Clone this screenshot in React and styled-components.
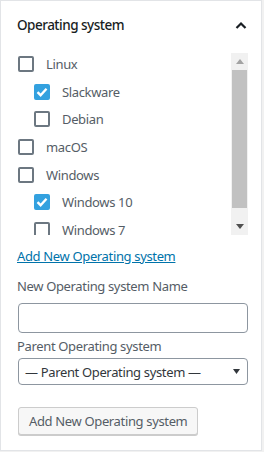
import React from "react";
import styled, { createGlobalStyle } from "styled-components";

const GlobalStyle = createGlobalStyle`
  html, body {
    margin: 0;
    padding: 0;
    background: #f1f1f1;
  }
  body {
    font-family: "Noto Sans", "Open Sans", sans-serif;
    font-size: 13px;
    letter-spacing: -0.35px;
    color: #555d66;
  }
`;

const Panel = styled.div`
  width: 260px;
  height: 449px;
  background: #fff;
  border: 1px solid #e2e4e7;
  box-sizing: content-box;
`;

const Header = styled.div`
  height: 48px;
  display: flex;
  align-items: center;
  justify-content: space-between;
  padding: 0 14px 0 16px;
  h2 {
    margin: 0;
    font-size: 13.5px;
    font-weight: 500;
    letter-spacing: -0.5px;
    color: #191e23;
  }
`;

const Body = styled.div`
  padding: 4px 13px 0 16px;
`;

const ScrollBox = styled.div`
  display: flex;
  height: 182px;
`;

const List = styled.ul`
  flex: 1;
  list-style: none;
  margin: 0;
  padding: 0;
  overflow: hidden;
`;

const Item = styled.li`
  height: 22px;
  margin-bottom: 5.67px;
  display: flex;
  align-items: center;
  gap: 12px;
  padding-left: ${(props) => (props.$child ? "17px" : "1px")};
  line-height: 22px;
`;

const Box = styled.span`
  width: 16px;
  height: 16px;
  box-sizing: border-box;
  border-radius: 2px;
  border: 2px solid ${(props) => (props.$checked ? "#33a1df" : "#6c7781")};
  background: ${(props) => (props.$checked ? "#33a1df" : "#fff")};
  display: flex;
  align-items: center;
  justify-content: center;
  flex-shrink: 0;
`;

const Scrollbar = styled.div`
  width: 17px;
  background: #f1f1f1;
  display: flex;
  flex-direction: column;
`;

const ScrollArrow = styled.div`
  height: 17px;
  display: flex;
  align-items: center;
  justify-content: center;
`;

const Thumb = styled.div`
  margin: 0 1px;
  height: 138px;
  background: #c1c1c1;
`;

const Spacer = styled.div`
  flex: 1;
`;

const AddLink = styled.a`
  display: block;
  margin-top: 11px;
  line-height: 20px;
  color: #0073aa;
  text-decoration: underline;
`;

const Label = styled.div`
  line-height: 20px;
  margin-top: ${(props) => props.$top}px;
`;

const TextInput = styled.div`
  margin-top: 7px;
  margin-left: 1px;
  height: 30px;
  box-sizing: border-box;
  border: 1px solid #8d96a0;
  border-radius: 4px;
`;

const Select = styled.div`
  margin-top: 2px;
  margin-left: 1px;
  height: 27px;
  box-sizing: border-box;
  border: 1px solid #8d96a0;
  border-radius: 4px;
  display: flex;
  align-items: center;
  justify-content: space-between;
  padding: 0 7px 0 6px;
  color: #32373c;
`;

const Button = styled.button`
  margin-top: 22px;
  margin-left: 1px;
  height: 28px;
  padding: 0 10px;
  font-family: inherit;
  font-size: 13px;
  letter-spacing: -0.35px;
  color: #555d66;
  background: #f7f7f7;
  border: 1px solid #ccc;
  border-radius: 3px;
  box-shadow: 0 1px 0 #ccc;
`;

const Check = () => (
  <svg width="12" height="12" viewBox="0 0 12 12">
    <path d="M1.5 6.2 L4.6 9.2 L10.5 2.8" fill="none" stroke="#fff" strokeWidth="2.4" />
  </svg>
);

const items = [
  { name: "Linux" },
  { name: "Slackware", child: true, checked: true },
  { name: "Debian", child: true },
  { name: "macOS" },
  { name: "Windows" },
  { name: "Windows 10", child: true, checked: true },
  { name: "Windows 7", child: true },
];

export default function App() {
  return (
    <>
      <GlobalStyle />
      <Panel>
        <Header>
          <h2>Operating system</h2>
          <svg width="12" height="8" viewBox="0 0 12 8">
            <path d="M1.5 7 L6 2.5 L10.5 7" fill="none" stroke="#191e23" strokeWidth="2.2" />
          </svg>
        </Header>
        <Body>
          <ScrollBox>
            <List>
              {items.map((item) => (
                <Item key={item.name} $child={item.child}>
                  <Box $checked={item.checked}>{item.checked && <Check />}</Box>
                  {item.name}
                </Item>
              ))}
            </List>
            <Scrollbar>
              <ScrollArrow>
                <svg width="8" height="5" viewBox="0 0 8 5">
                  <path d="M0 5 L4 0 L8 5 Z" fill="#a3a3a3" />
                </svg>
              </ScrollArrow>
              <Thumb />
              <Spacer />
              <ScrollArrow>
                <svg width="8" height="5" viewBox="0 0 8 5">
                  <path d="M0 0 L4 5 L8 0 Z" fill="#505050" />
                </svg>
              </ScrollArrow>
            </Scrollbar>
          </ScrollBox>
          <AddLink href="#">Add New Operating system</AddLink>
          <Label $top={10}>New Operating system Name</Label>
          <TextInput />
          <Label $top={3}>Parent Operating system</Label>
          <Select>
            <span>— Parent Operating system —</span>
            <svg width="7" height="5" viewBox="0 0 7 5">
              <path d="M0 0 L3.5 5 L7 0 Z" fill="#32373c" />
            </svg>
          </Select>
          <Button>Add New Operating system</Button>
        </Body>
      </Panel>
    </>
  );
}
